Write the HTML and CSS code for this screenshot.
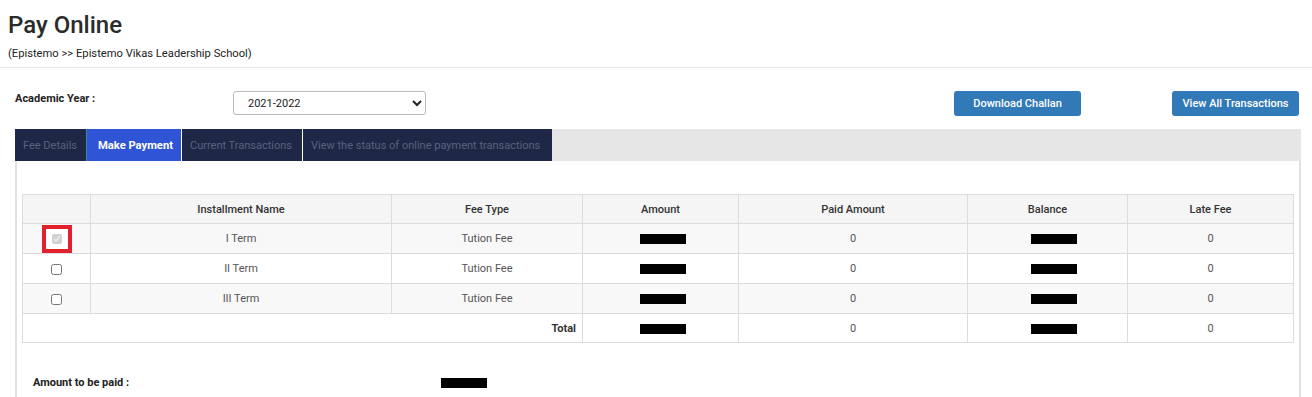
FILE: index.html
```html
<!DOCTYPE html>
<html>
<head>
<meta charset="utf-8">
<link rel="stylesheet" href="styles.css">
</head>
<body>
<div class="page-head">
  <h1 class="title">Pay Online</h1>
  <div class="crumb">(Epistemo &gt;&gt; Epistemo Vikas Leadership School)</div>
</div>
<div class="filters">
  <label class="year-label">Academic Year :</label>
  <select class="year-select"><option>2021-2022</option></select>
  <div class="spacer"></div>
  <button class="btn">Download Challan</button>
  <button class="btn btn-last">View All Transactions</button>
</div>
<div class="tabs">
  <div class="tab">Fee Details</div>
  <div class="tab active">Make Payment</div>
  <div class="tab">Current Transactions</div>
  <div class="tab">View the status of online payment transactions</div>
</div>
<div class="panel">
  <table class="fees">
    <colgroup>
      <col style="width:68px"><col style="width:301px"><col style="width:191px"><col style="width:156px"><col style="width:229px"><col style="width:160px"><col style="width:166px">
    </colgroup>
    <thead>
      <tr><th></th><th>Installment Name</th><th>Fee Type</th><th>Amount</th><th>Paid Amount</th><th>Balance</th><th>Late Fee</th></tr>
    </thead>
    <tbody>
      <tr class="odd"><td><span class="mark"><input type="checkbox" checked disabled></span></td><td>I Term</td><td>Tution Fee</td><td class="amt"><span class="redact"></span></td><td>0</td><td class="bal"><span class="redact"></span></td><td>0</td></tr>
      <tr><td><input type="checkbox" class="cb"></td><td>II Term</td><td>Tution Fee</td><td class="amt"><span class="redact"></span></td><td>0</td><td class="bal"><span class="redact"></span></td><td>0</td></tr>
      <tr class="odd"><td><input type="checkbox" class="cb"></td><td>III Term</td><td>Tution Fee</td><td class="amt"><span class="redact"></span></td><td>0</td><td class="bal"><span class="redact"></span></td><td>0</td></tr>
      <tr class="total"><td colspan="3" class="total-label">Total</td><td class="amt"><span class="redact"></span></td><td>0</td><td class="bal"><span class="redact"></span></td><td>0</td></tr>
    </tbody>
  </table>
  <div class="pay-row">
    <span class="pay-label">Amount to be paid :</span>
    <span class="redact"></span>
  </div>
</div>
</body>
</html>
```
FILE: styles.css
```css
* { box-sizing: border-box; }
body {
  margin: 0;
  font-family: Roboto, "Liberation Sans", Arial, sans-serif;
  color: #333;
  background: #fff;
  font-size: 11px;
}
.page-head {
  padding: 11px 8px 7px;
  border-bottom: 1px solid #e8e8e8;
}
.title {
  margin: 0;
  font-size: 24px;
  font-weight: 500;
  line-height: 28px;
  color: #2b2b2b;
}
.crumb {
  margin-top: 8px;
  font-size: 11.2px;
  line-height: 13px;
  color: #222;
}
.filters {
  display: flex;
  align-items: flex-start;
  padding: 23px 13px 0 15px;
  height: 61px;
}
.year-label {
  width: 218px;
  font-weight: 700;
  font-size: 11px;
  line-height: 14px;
  margin-top: 1px;
  color: #222;
}
.year-select {
  width: 193px;
  height: 24px;
  font-family: inherit;
  font-size: 11px;
  color: #222;
  border: 1px solid #b9b9b9;
  border-radius: 3px;
  padding-left: 10px;
  background: #fff;
}
.spacer { flex: 1; }
.btn {
  width: 127px;
  height: 25px;
  border: 0;
  border-radius: 3px;
  background: #3279b8;
  color: #fff;
  font-family: inherit;
  font-size: 11px;
  font-weight: 500;
  margin-right: 91px;
}
.btn-last { margin-right: 0; }
.tabs {
  display: flex;
  margin: 0 11px 0 15px;
  height: 32px;
  background: #e6e6e6;
}
.tab {
  display: flex;
  align-items: center;
  padding: 0 8px;
  background: #1e2846;
  color: #58627e;
  font-size: 11px;
  border-right: 1px solid #fff;
}
.tab:first-child { width: 72px; border-right: 1px solid #3a8a9a; }
.tab.active {
  width: 95px;
  padding-left: 11px;
  background: #2f55d6;
  color: #fff;
  font-weight: 700;
  font-size: 11.2px;
}
.tab:nth-child(3) { width: 121px; }
.tab:nth-child(4) { width: 249px; border-right: 0; }
.panel {
  margin: 0 11px 0 15px;
  border-left: 2px solid #e2e2e2;
  border-right: 2px solid #e2e2e2;
  padding: 33px 5px 0 5px;
  height: 240px;
}
.fees {
  border-collapse: collapse;
  width: 1271px;
  table-layout: fixed;
  font-size: 11px;
}
.fees th, .fees td {
  border: 1px solid #dcdcdc;
  height: 30px;
  padding: 0 6px;
  text-align: center;
  vertical-align: middle;
}
.fees th {
  height: 29px;
  background: #f5f5f5;
  font-weight: 500;
  color: #333;
}
.fees tr.total td { height: 29px; }
.fees td { color: #555; }
.fees tr.odd td { background: #f8f8f8; }
.fees td.total-label {
  text-align: right;
  font-weight: 700;
  color: #333;
}
.fees td.amt { padding-left: 10px; }
.fees td.bal { padding-left: 18px; }
.redact {
  display: inline-block;
  width: 46px;
  height: 10px;
  background: #000;
  vertical-align: middle;
}
.cb {
  width: 11px;
  height: 11px;
  margin: 0;
  vertical-align: middle;
}
.mark {
  display: inline-flex;
  align-items: center;
  justify-content: center;
  width: 30px;
  height: 28px;
  border: 4px solid #e1212b;
  background: #fff;
  vertical-align: middle;
}
.mark input { width: 10px; height: 10px; margin: 0; }
.pay-row {
  display: flex;
  align-items: center;
  padding-left: 11px;
  margin-top: 33px;
}
.pay-label {
  width: 408px;
  font-weight: 700;
  color: #222;
}
```
